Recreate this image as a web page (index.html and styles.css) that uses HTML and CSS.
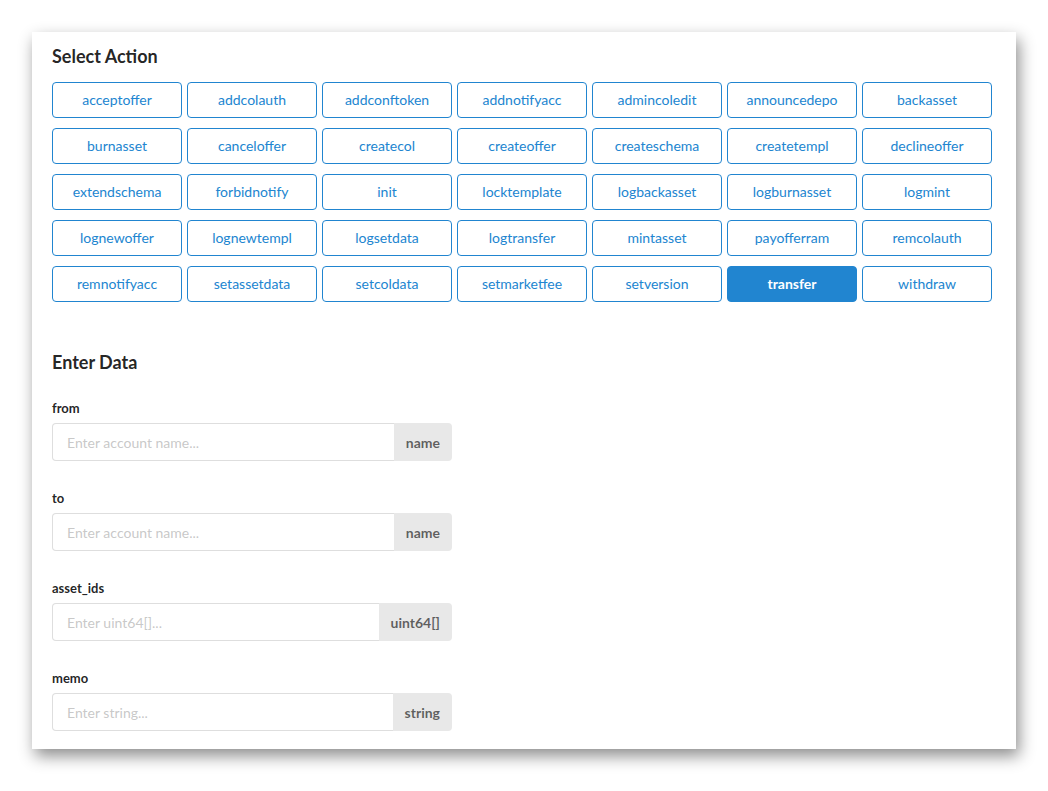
FILE: index.html
```html
<!DOCTYPE html>
<html lang="en">
<head>
<meta charset="utf-8">
<title>Select Action</title>
<link rel="stylesheet" href="styles.css">
</head>
<body>
<div class="card">
  <h2 class="title">Select Action</h2>
  <div class="actions">
    <button class="act">acceptoffer</button>
    <button class="act">addcolauth</button>
    <button class="act">addconftoken</button>
    <button class="act">addnotifyacc</button>
    <button class="act">admincoledit</button>
    <button class="act">announcedepo</button>
    <button class="act">backasset</button>
    <button class="act">burnasset</button>
    <button class="act">canceloffer</button>
    <button class="act">createcol</button>
    <button class="act">createoffer</button>
    <button class="act">createschema</button>
    <button class="act">createtempl</button>
    <button class="act">declineoffer</button>
    <button class="act">extendschema</button>
    <button class="act">forbidnotify</button>
    <button class="act">init</button>
    <button class="act">locktemplate</button>
    <button class="act">logbackasset</button>
    <button class="act">logburnasset</button>
    <button class="act">logmint</button>
    <button class="act">lognewoffer</button>
    <button class="act">lognewtempl</button>
    <button class="act">logsetdata</button>
    <button class="act">logtransfer</button>
    <button class="act">mintasset</button>
    <button class="act">payofferram</button>
    <button class="act">remcolauth</button>
    <button class="act">remnotifyacc</button>
    <button class="act">setassetdata</button>
    <button class="act">setcoldata</button>
    <button class="act">setmarketfee</button>
    <button class="act">setversion</button>
    <button class="act active">transfer</button>
    <button class="act">withdraw</button>
  </div>

  <h2 class="title data-title">Enter Data</h2>
  <form class="form">
    <div class="field">
      <label class="field-label">from</label>
      <div class="labeled">
        <input class="input" type="text" placeholder="Enter account name...">
        <span class="addon">name</span>
      </div>
    </div>
    <div class="field">
      <label class="field-label">to</label>
      <div class="labeled">
        <input class="input" type="text" placeholder="Enter account name...">
        <span class="addon">name</span>
      </div>
    </div>
    <div class="field">
      <label class="field-label">asset_ids</label>
      <div class="labeled">
        <input class="input" type="text" placeholder="Enter uint64[]...">
        <span class="addon">uint64[]</span>
      </div>
    </div>
    <div class="field last">
      <label class="field-label">memo</label>
      <div class="labeled">
        <input class="input" type="text" placeholder="Enter string...">
        <span class="addon">string</span>
      </div>
    </div>
  </form>
</div>
</body>
</html>
```

FILE: styles.css
```css
html, body {
  margin: 0;
  padding: 0;
  background: #ffffff;
}

body {
  font-family: Lato, "Noto Sans", "Liberation Sans", sans-serif;
  color: rgba(0, 0, 0, 0.87);
  padding: 32px;
}

.card {
  width: 984px;
  box-sizing: border-box;
  background: #ffffff;
  padding: 12px 20px 18px;
  box-shadow: 3px 7px 15px rgba(0, 0, 0, 0.45);
}

.title {
  margin: 0 0 14px;
  font-size: 18px;
  line-height: 24px;
  font-weight: 700;
  color: rgba(0, 0, 0, 0.87);
}

.data-title {
  margin-top: 48px;
  margin-bottom: 26px;
}

.actions {
  display: grid;
  grid-template-columns: repeat(7, 130px);
  column-gap: 5px;
  row-gap: 10px;
}

.act {
  height: 36px;
  margin: 0;
  padding: 0;
  box-sizing: border-box;
  border: 1px solid #2185d0;
  border-radius: 4px;
  background: #ffffff;
  color: #2185d0;
  font-family: Lato, "Noto Sans", "Liberation Sans", sans-serif;
  font-size: 14px;
  font-weight: 400;
  line-height: 14px;
  cursor: pointer;
}

.act.active {
  background: #2185d0;
  color: #ffffff;
  font-weight: 700;
}

.form {
  width: 400px;
}

.field {
  margin-bottom: 29px;
}

.field.last {
  margin-bottom: 0;
}

.field-label {
  display: block;
  font-size: 13px;
  line-height: 16px;
  font-weight: 700;
  color: rgba(0, 0, 0, 0.87);
  margin-bottom: 7px;
}

.labeled {
  display: flex;
  height: 38px;
}

.input {
  flex: 1;
  min-width: 0;
  margin: 0;
  box-sizing: border-box;
  height: 38px;
  padding: 0 14px;
  border: 1px solid rgba(34, 36, 38, 0.15);
  border-right: none;
  border-radius: 4px 0 0 4px;
  font-family: Lato, "Noto Sans", "Liberation Sans", sans-serif;
  font-size: 14px;
  color: rgba(0, 0, 0, 0.87);
  background: #ffffff;
  outline: none;
}

.input::placeholder {
  color: rgba(191, 191, 191, 0.87);
}

.addon {
  display: flex;
  align-items: center;
  padding: 0 12px;
  background: #e8e8e8;
  border-radius: 0 4px 4px 0;
  font-size: 14px;
  font-weight: 700;
  color: rgba(0, 0, 0, 0.6);
  white-space: nowrap;
}
```
